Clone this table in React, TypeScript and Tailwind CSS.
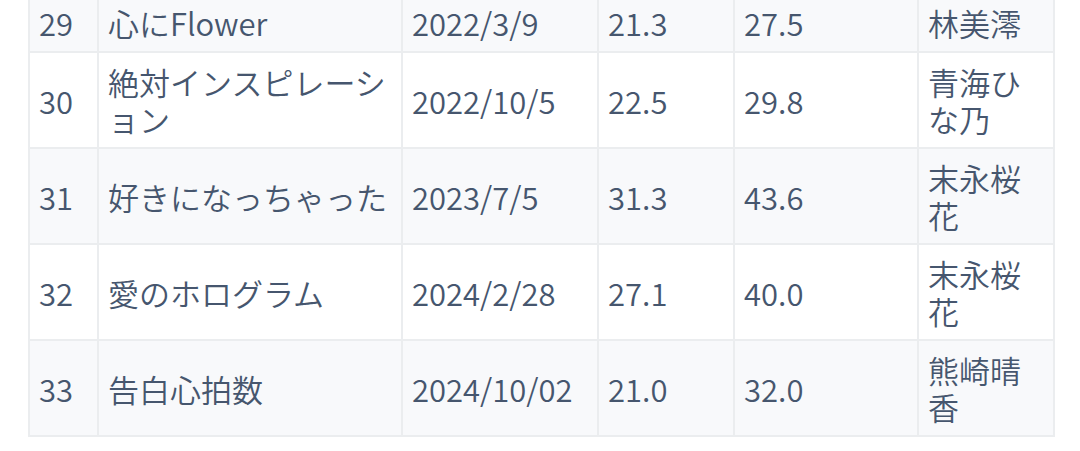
const rows = [
  { no: "29", title: "心にFlower", date: "2022/3/9", a: "21.3", b: "27.5", center: "林美澪" },
  { no: "30", title: "絶対インスピレーション", date: "2022/10/5", a: "22.5", b: "29.8", center: "青海ひな乃" },
  { no: "31", title: "好きになっちゃった", date: "2023/7/5", a: "31.3", b: "43.6", center: "末永桜花" },
  { no: "32", title: "愛のホログラム", date: "2024/2/28", a: "27.1", b: "40.0", center: "末永桜花" },
  { no: "33", title: "告白心拍数", date: "2024/10/02", a: "21.0", b: "32.0", center: "熊崎晴香" },
];

function Cell({ children, shade }: { children: React.ReactNode; shade: boolean }) {
  return (
    <div className={`flex items-center px-[9px] py-[10px] ${shade ? "bg-[#f8f9fb]" : "bg-white"}`}>
      <div className="min-w-0 break-all">{children}</div>
    </div>
  );
}

export default function App() {
  return (
    <div className="h-[451px] w-[1080px] overflow-hidden bg-white">
      <div
        className="-mt-[8px] ml-[28px] grid w-[1027px] grid-cols-[67px_302px_194px_134px_182px_134px] gap-[2px] bg-[#ebedef] p-[2px] text-[31px] font-[350] leading-[37px] text-[#46566e]"
        style={{ fontFamily: '"Noto Sans CJK JP", "Noto Sans", sans-serif' }}
      >
        {rows.map((r, i) => {
          const shade = i % 2 === 0;
          return [r.no, r.title, r.date, r.a, r.b, r.center].map((v, j) => (
            <Cell key={`${i}-${j}`} shade={shade}>
              {v}
            </Cell>
          ));
        })}
      </div>
    </div>
  );
}
